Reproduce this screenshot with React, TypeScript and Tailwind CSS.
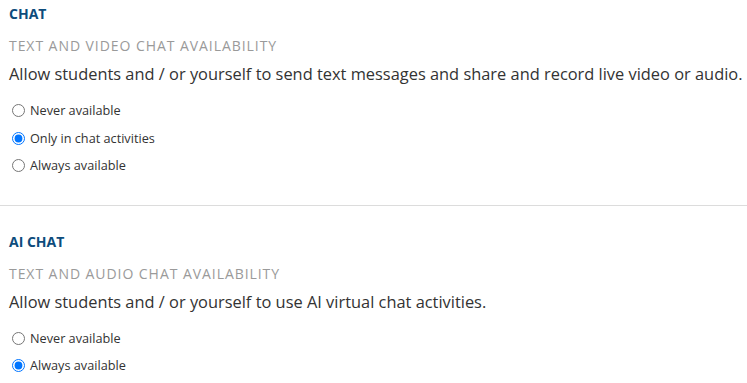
import React from "react";

function Radio({ label, checked, name }: { label: string; checked?: boolean; name: string }) {
  return (
    <label className="flex items-center h-[27.5px] text-[12.7px] text-[#333]">
      <input type="radio" name={name} defaultChecked={checked} className="m-0 ml-[3px] mr-[5px] w-[13px] h-[13px]" />
      <span>{label}</span>
    </label>
  );
}

function Section({
  title,
  subtitle,
  desc,
  name,
  options,
}: {
  title: string;
  subtitle: string;
  desc: string;
  name: string;
  options: { label: string; checked?: boolean }[];
}) {
  return (
    <div className="px-[9px]">
      <div className="text-[14px] font-bold text-[#0d4c7c] leading-[20px]">{title}</div>
      <div className="mt-[12px] text-[14px] tracking-[0.94px] text-[#9a9a9a] leading-[20px]">{subtitle}</div>
      <div className="mt-[8px] text-[16.4px] text-[#333] leading-[20px] whitespace-nowrap">{desc}</div>
      <div className="mt-[13px]">
        {options.map((o) => (
          <Radio key={o.label} name={name} label={o.label} checked={o.checked} />
        ))}
      </div>
    </div>
  );
}

export default function App() {
  return (
    <div className="w-[747px] h-[383px] bg-white overflow-hidden" style={{ fontFamily: '"Open Sans", sans-serif' }}>
      <div className="pt-[4px]">
        <Section
          title="CHAT"
          subtitle="TEXT AND VIDEO CHAT AVAILABILITY"
          desc="Allow students and / or yourself to send text messages and share and record live video or audio."
          name="chat"
          options={[
            { label: "Never available" },
            { label: "Only in chat activities", checked: true },
            { label: "Always available" },
          ]}
        />
      </div>
      <div className="mt-[25px] border-t border-[#dcdcdc]" />
      <div className="pt-[26px]">
        <Section
          title="AI CHAT"
          subtitle="TEXT AND AUDIO CHAT AVAILABILITY"
          desc="Allow students and / or yourself to use AI virtual chat activities."
          name="ai"
          options={[{ label: "Never available" }, { label: "Always available", checked: true }]}
        />
      </div>
    </div>
  );
}
